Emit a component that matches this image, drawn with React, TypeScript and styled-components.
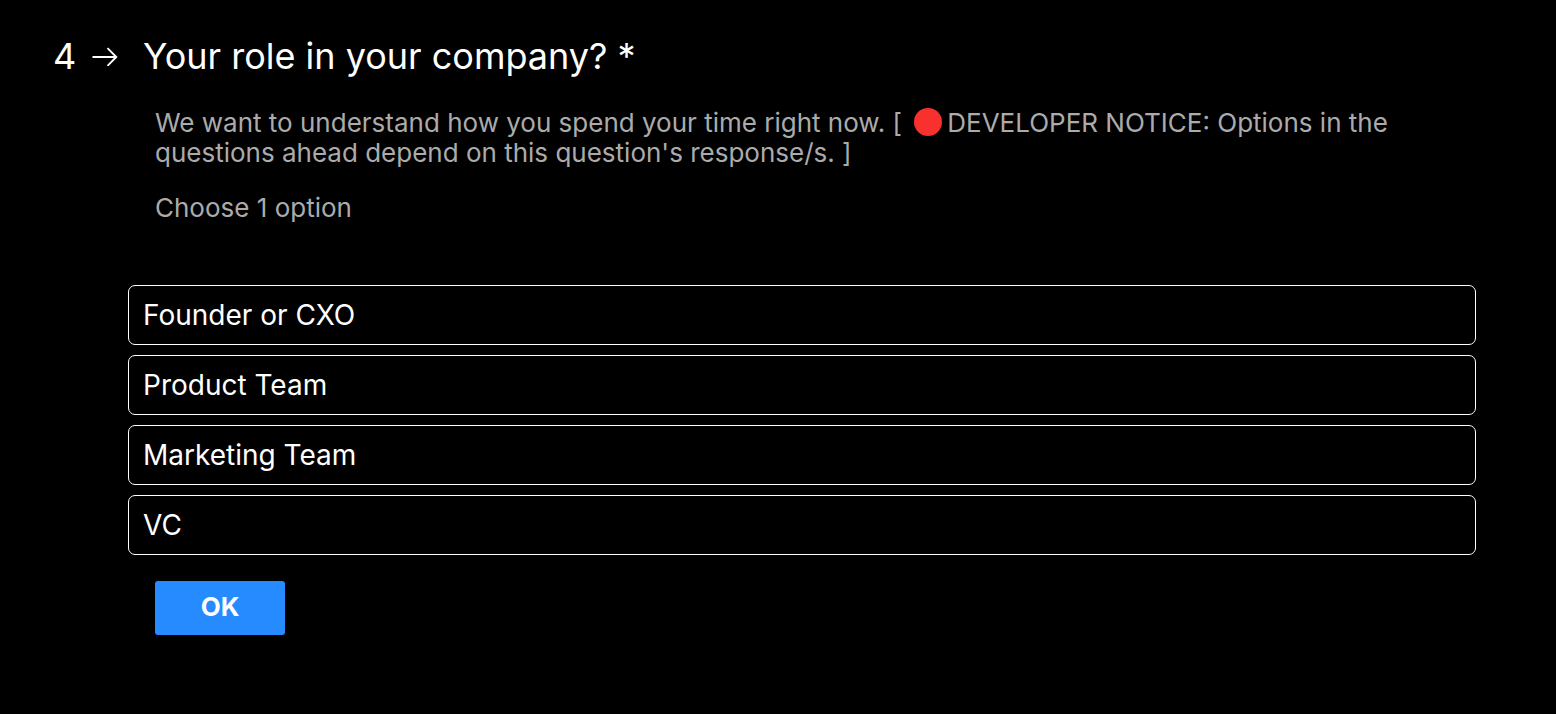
import React, { useState } from "react";
import styled, { createGlobalStyle } from "styled-components";

const GlobalStyle = createGlobalStyle`
  *, *::before, *::after { box-sizing: border-box; }
  body {
    margin: 0;
    background: #000;
    color: #fff;
    font-family: Inter, "Liberation Sans", sans-serif;
  }
`;

const Form = styled.form`
  padding: 32px 80px 80px 53px;
`;

const Heading = styled.header`
  display: flex;
  align-items: center;
`;

const QuestionNumber = styled.span`
  display: flex;
  align-items: center;
  gap: 16px;
  width: 90px;
  font-size: 36px;
  line-height: 48px;
`;

const Title = styled.h1`
  margin: 0;
  font-size: 36px;
  font-weight: 400;
  line-height: 48px;
`;

const Details = styled.div`
  padding: 28px 0 0 102px;
  color: #ababab;
  font-size: 26px;
  line-height: 30px;
`;

const Paragraph = styled.p`
  margin: 0 0 25px;
`;

const Dot = styled.svg`
  width: 28px;
  height: 28px;
  margin: 0 5px;
  vertical-align: -4px;
`;

const Options = styled.fieldset`
  display: flex;
  flex-direction: column;
  gap: 10px;
  margin: 62px 0 0 75px;
  padding: 0;
  border: 0;
`;

const Option = styled.label<{ $selected: boolean }>`
  display: flex;
  align-items: center;
  height: 60px;
  padding: 0 14px;
  border: 1px solid #fff;
  border-radius: 7px;
  background: ${(p) => (p.$selected ? "#222" : "transparent")};
  font-size: 28px;
  line-height: 34px;
  cursor: pointer;

  &:focus-within { outline: 2px solid #268bff; }
`;

const Radio = styled.input`
  appearance: none;
  width: 0;
  height: 0;
  margin: 0;
  outline: none;
`;

const Submit = styled.button`
  display: block;
  width: 130px;
  height: 54px;
  margin: 26px 0 0 102px;
  padding: 0 0 2px;
  border: 0;
  border-radius: 3px;
  background: #268bff;
  color: #fff;
  font-family: inherit;
  font-size: 26px;
  font-weight: 700;
  line-height: 30px;
  cursor: pointer;
`;

const roles = ["Founder or CXO", "Product Team", "Marketing Team", "VC"];

export default function App() {
  const [role, setRole] = useState("");

  return (
    <>
      <GlobalStyle />
      <Form onSubmit={(e) => e.preventDefault()}>
        <Heading>
          <QuestionNumber>
            4
            <svg width="26" height="20" viewBox="0 0 26 20" fill="none" stroke="#fff" strokeWidth="1.9" aria-hidden="true">
              <path d="M0.5 11H24.5M15.5 2.2L24.3 11L15.5 19.8" />
            </svg>
          </QuestionNumber>
          <Title id="question">Your role in your company? *</Title>
        </Heading>
        <Details>
          <Paragraph>
            We want to understand how you spend your time right now. [{" "}
            <Dot viewBox="0 0 28 28" aria-hidden="true">
              <circle cx="14" cy="14" r="14" fill="#f8312f" />
            </Dot>
            DEVELOPER NOTICE: Options in the questions ahead depend on this question's response/s. ]
          </Paragraph>
          <Paragraph>Choose 1 option</Paragraph>
        </Details>
        <Options aria-labelledby="question">
          {roles.map((name) => (
            <Option key={name} $selected={role === name}>
              <Radio type="radio" name="role" value={name} checked={role === name} onChange={() => setRole(name)} />
              {name}
            </Option>
          ))}
        </Options>
        <Submit type="submit">OK</Submit>
      </Form>
    </>
  );
}
